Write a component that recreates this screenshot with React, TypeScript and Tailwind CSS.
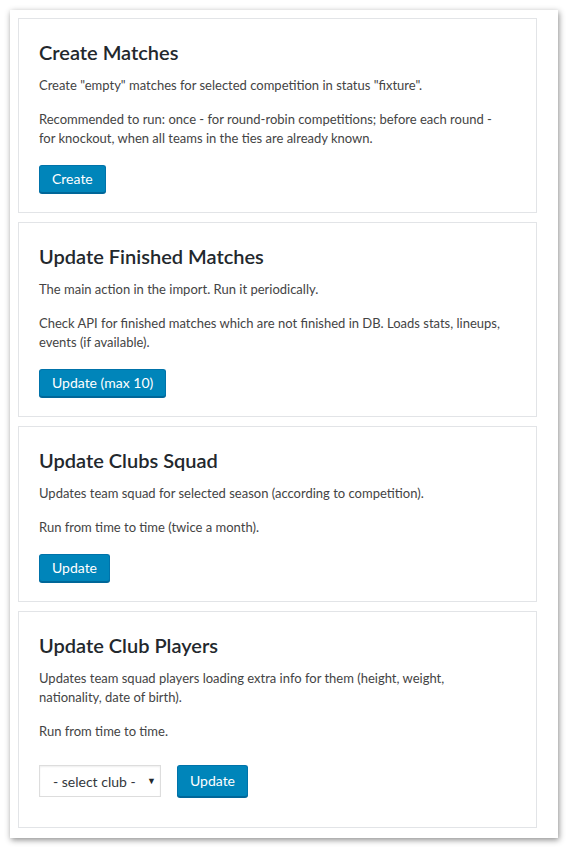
import React from 'react';

function Card({
  title,
  lines,
  children,
  actionsClass = 'mt-[17px]',
  bottomClass = 'pb-[19px]',
}: {
  title: string;
  lines: React.ReactNode[];
  children: React.ReactNode;
  actionsClass?: string;
  bottomClass?: string;
}) {
  return (
    <div className={`border border-[#e2e4e7] bg-white px-5 pt-[19px] ${bottomClass}`}>
      <h2 className="text-[20px] leading-[28px] font-semibold text-[#23282d] mb-[10px]">{title}</h2>
      {lines.map((line, i) => (
        <p key={i} className={`text-[13px] leading-[19px] text-[#444] ${i > 0 ? 'mt-[15px]' : ''}`}>
          {line}
        </p>
      ))}
      <div className={`${actionsClass} flex items-center gap-4`}>{children}</div>
    </div>
  );
}

function PrimaryButton({ label, tall }: { label: string; tall?: boolean }) {
  return (
    <button
      className={`${tall ? 'h-[32px]' : 'h-[28px]'} px-[12px] rounded-[3px] bg-[#0085ba] border border-[#0073aa] border-b-[#006799] shadow-[0_1px_0_#006799] text-white text-[14px] leading-none`}
    >
      {label}
    </button>
  );
}

export default function App() {
  return (
    <div className="min-h-screen bg-white p-[10px] font-['Lato','Liberation_Sans',sans-serif]">
      <div className="w-[548px] bg-white pt-2 pl-2 pr-[21px] pb-[10px] flex flex-col gap-[9px] shadow-[1px_2px_6px_rgba(0,0,0,0.45)]">
        <Card
          title="Create Matches"
          lines={[
            'Create "empty" matches for selected competition in status "fixture".',
            <>
              Recommended to run: once - for round-robin competitions; before each round -
              <br />
              for knockout, when all teams in the ties are already known.
            </>,
          ]}
        >
          <PrimaryButton label="Create" />
        </Card>

        <Card
          title="Update Finished Matches"
          lines={[
            'The main action in the import. Run it periodically.',
            <>
              Check API for finished matches which are not finished in DB. Loads stats, lineups,
              <br />
              events (if available).
            </>,
          ]}
        >
          <PrimaryButton label="Update (max 10)" />
        </Card>

        <Card
          title="Update Clubs Squad"
          lines={[
            'Updates team squad for selected season (according to competition).',
            'Run from time to time (twice a month).',
          ]}
        >
          <PrimaryButton label="Update" />
        </Card>

        <Card
          title="Update Club Players"
          lines={[
            <>
              Updates team squad players loading extra info for them (height, weight,
              <br />
              nationality, date of birth).
            </>,
            'Run from time to time.',
          ]}
          actionsClass="mt-[24px]"
          bottomClass="pb-[30px]"
        >
          <div className="relative">
            <select className="appearance-none h-[32px] w-[122px] border border-[#ddd] bg-white pl-[13px] pr-6 text-[14px] text-[#32373c] shadow-[inset_0_1px_2px_rgba(0,0,0,0.07)]">
              <option>- select club -</option>
            </select>
            <span className="pointer-events-none absolute left-[108px] top-[9px] text-[9px] text-[#23282d]">▼</span>
          </div>
          <PrimaryButton label="Update" tall />
        </Card>
      </div>
    </div>
  );
}
